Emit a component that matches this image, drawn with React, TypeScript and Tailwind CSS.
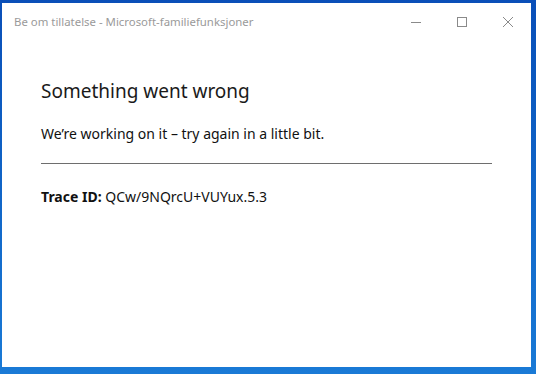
export default function App() {
  return (
    <div className="w-[536px] h-[374px] bg-gradient-to-b from-[#0a4fb8] to-[#1a7ad6] pt-[3px] pl-[2px] pr-[5px] pb-[7px] font-['Noto_Sans',sans-serif]">
      <div className="flex h-full flex-col bg-white">
        {/* title bar */}
        <div className="flex h-[38px] items-center">
          <span className="pl-[12px] text-[11.4px] text-[#9a9a9a]">Be om tillatelse - Microsoft-familiefunksjoner</span>
          <div className="ml-auto flex h-full items-center">
            <div className="flex h-full w-[46px] items-center justify-center">
              <svg width="10" height="10" viewBox="0 0 10 10">
                <path d="M0 5.5h10" stroke="#8a8a8a" strokeWidth="1" />
              </svg>
            </div>
            <div className="flex h-full w-[46px] items-center justify-center">
              <svg width="10" height="10" viewBox="0 0 10 10">
                <rect x="0.5" y="0.5" width="9" height="9" fill="none" stroke="#8a8a8a" strokeWidth="1" />
              </svg>
            </div>
            <div className="flex h-full w-[46px] items-center justify-center">
              <svg width="10" height="10" viewBox="0 0 10 10">
                <path d="M0 0L10 10M10 0L0 10" stroke="#8a8a8a" strokeWidth="1" />
              </svg>
            </div>
          </div>
        </div>

        <div className="px-[39px] pt-[37px]">
          <h1 className="text-[19px] leading-[26px] text-[#1a1a1a]">Something went wrong</h1>
          <p className="mt-[20px] text-[14px] leading-[20px] text-[#111]">
            We’re working on it – try again in a little bit.
          </p>
          <div className="mt-[19px] h-px w-[451px] bg-[#6e6e6e]" />
          <p className="mt-[23px] text-[14px] leading-[20px] text-[#111]">
            <span className="font-bold">Trace ID:</span> QCw/9NQrcU+VUYux.5.3
          </p>
        </div>
      </div>
    </div>
  );
}
